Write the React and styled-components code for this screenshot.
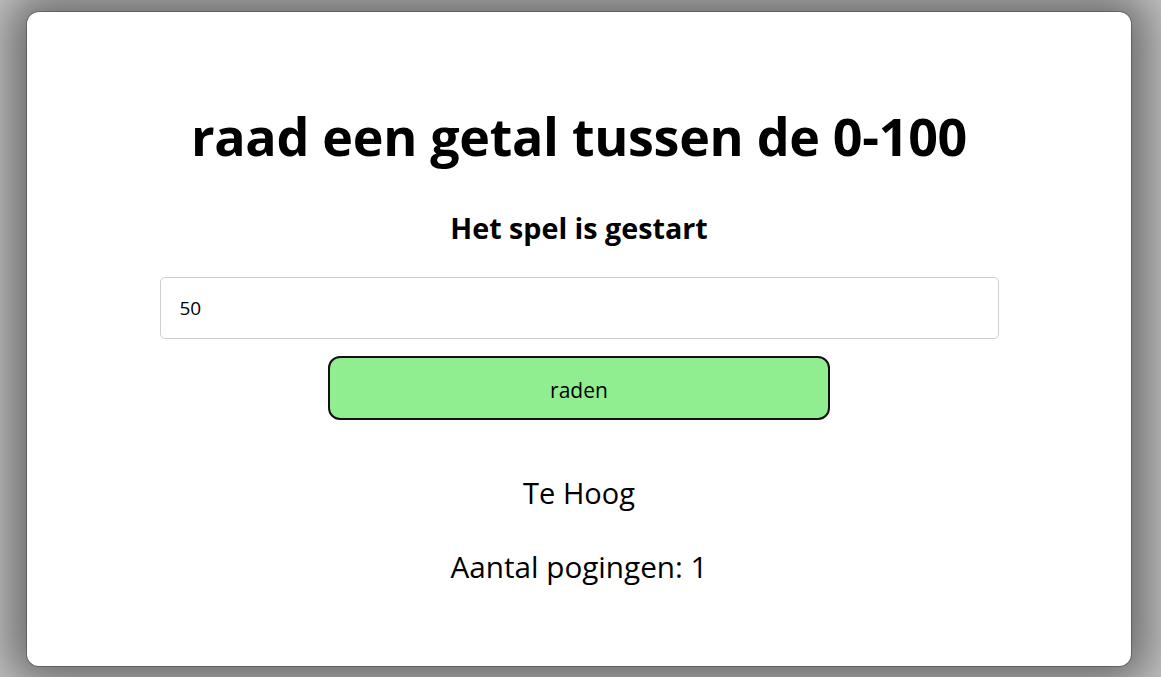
import styled, { createGlobalStyle } from "styled-components"

const GlobalStyle = createGlobalStyle`
    html, body {
        margin: 0;
        height: 100%;
    }
    body {
        background: #c4c4c4;
        font-family: "Open Sans", "Noto Sans", sans-serif;
        overflow: hidden;
    }
    #root {
        height: 100%;
    }
`

const Page = () => {
    return (
        <>
            <GlobalStyle />
            <Wrapper>
                <Card>
                    <Title>raad een getal tussen de 0-100</Title>
                    <Status>Het spel is gestart</Status>
                    <GuessInput type="text" defaultValue="50" />
                    <GuessButton>raden</GuessButton>
                    <Message>Te Hoog</Message>
                    <Message $last>Aantal pogingen: 1</Message>
                </Card>
            </Wrapper>
        </>
    )
}

const Wrapper = styled.div`
    height: 100%;
    box-sizing: border-box;
    padding: 12px 30px 11px 27px;
    display: flex;
`

const Card = styled.div`
    flex: 1;
    background-color: #fff;
    border-radius: 12px;
    box-shadow: 0 0 0 1px rgba(0, 0, 0, 0.25), 0 0 45px 18px rgba(0, 0, 0, 0.45);
    display: flex;
    flex-direction: column;
    align-items: center;
    padding-top: 90px;
    box-sizing: border-box;
`

const Title = styled.h1`
    margin: 0;
    font-size: 52px;
    font-weight: 700;
    line-height: 68px;
    color: #000;
    letter-spacing: -0.3px;
`

const Status = styled.h2`
    margin: 38px 0 0;
    font-size: 28.7px;
    font-weight: 700;
    line-height: 40px;
    color: #000;
`

const GuessInput = styled.input`
    margin-top: 29px;
    width: 839px;
    height: 62px;
    box-sizing: border-box;
    padding: 0 19px;
    border: 1px solid #cfcfcf;
    border-radius: 5px;
    font-family: inherit;
    font-size: 19px;
    color: #000;
    outline: none;
`

const GuessButton = styled.button`
    margin-top: 17px;
    width: 502px;
    height: 64px;
    padding: 3px 0 0;
    background-color: #90ee90;
    border: 2px solid #111;
    border-radius: 12px;
    font-family: inherit;
    font-size: 21px;
    color: #000;
    cursor: pointer;
`

const Message = styled.p`
    margin: ${props => (props.$last ? "34px 0 0" : "53px 0 0")};
    font-size: ${props => (props.$last ? "29.7px" : "29px")};
    line-height: 40px;
    color: #000;
`

export default Page
